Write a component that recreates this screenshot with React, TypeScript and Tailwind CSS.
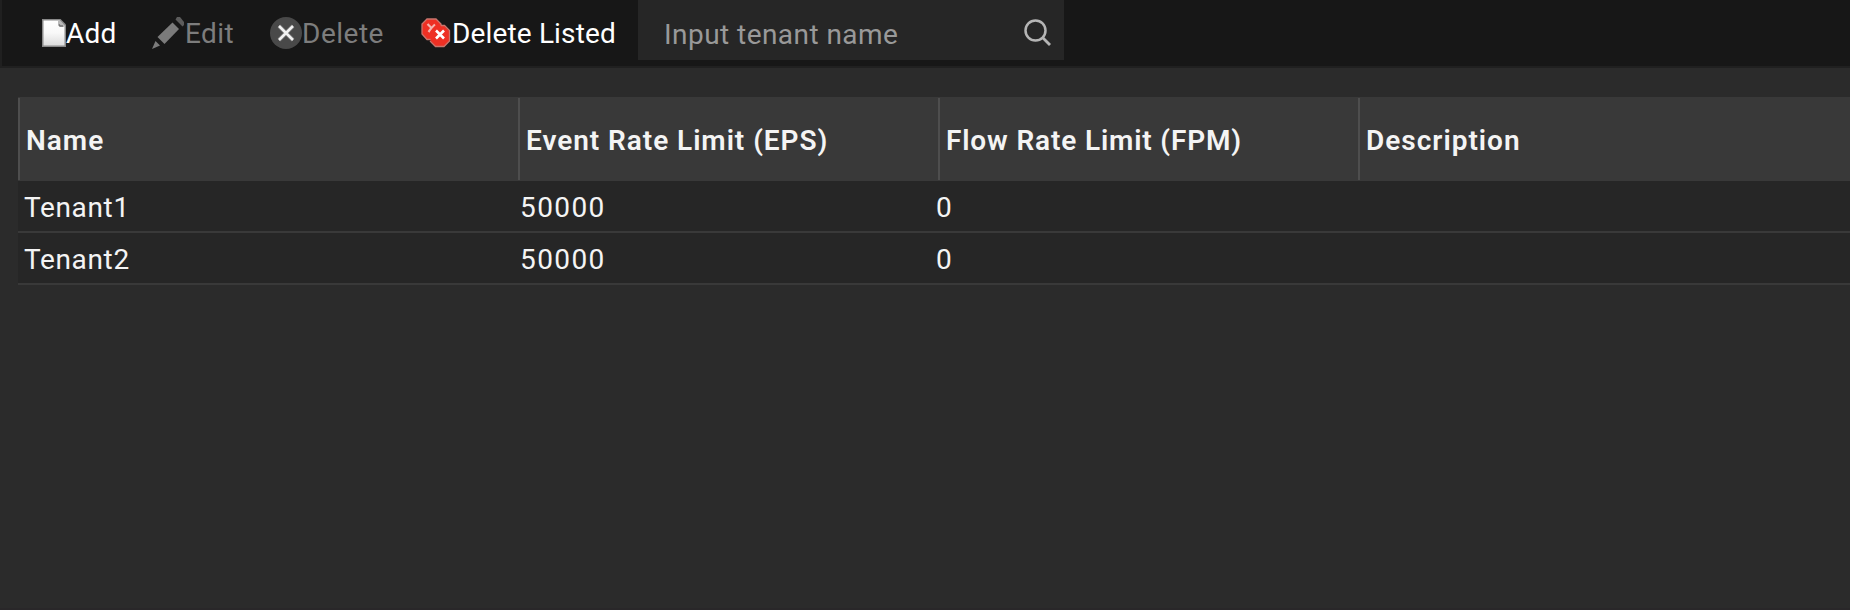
import type { ReactNode } from "react";

const AddIcon = () => (
  <svg width="24" height="28" viewBox="0 0 24 28" fill="none">
    <defs>
      <linearGradient id="page" x1="0" y1="0" x2="0" y2="1">
        <stop offset="0" stopColor="#ffffff" />
        <stop offset="0.5" stopColor="#f8f8f8" />
        <stop offset="1" stopColor="#dcdcdc" />
      </linearGradient>
    </defs>
    <path d="M0 0H18.500L24 5.500V28H0Z" fill="#8a8a8a" />
    <path d="M1.500 1.500H17.500L22.500 7V26.500H1.500Z" fill="url(#page)" />
    <path d="M16 1.500H18.200L22.500 6.500V8H18L16 6Z" fill="#b9b9b9" />
    <path d="M17 5.500L18 7H21" stroke="#747474" strokeWidth="1.500" />
  </svg>
);

const EditIcon = () => (
  <svg width="32" height="32" viewBox="0 0 32 32" fill="#7b7b7b">
    <path d="M25 0H28L32 5V8L30.500 9.500L23.500 2.500Z" fill="#5c5c5c" />
    <path d="M20.500 5.500L27 12L12.500 27L5.500 20Z" />
    <path d="M3.500 24L8 28.500L0 32Z" />
  </svg>
);

const DeleteIcon = () => (
  <svg width="32" height="32" viewBox="0 0 32 32" fill="none">
    <circle cx="16" cy="16" r="16" fill="#494949" />
    <path d="M9 9L23 23M23 9L9 23" stroke="#777777" strokeWidth="4" />
    <path d="M9 9L23 23M23 9L9 23" stroke="#f1f1f1" strokeWidth="2.500" />
  </svg>
);

const DeleteListedIcon = () => (
  <svg width="30" height="30" viewBox="0 0 30 30" fill="none">
    <path d="M6 1H15L20 6V16L14.500 21.500H6L1 16V6Z" fill="#ee3024" stroke="#c9766e" strokeWidth="1.300" />
    <path d="M6.500 6L10.500 10L14 6.500M10.500 10L7.500 14" stroke="#f5b4ae" strokeWidth="2.200" />
    <path d="M14.500 7.500H23L28.500 13V23L23 28.500H14.500L9.500 23V13Z" fill="#ee3024" />
    <path d="M20 7.500H23.500L28.500 12.500V23L23 28.500H14.500L9 23" stroke="#c9766e" strokeWidth="1.300" />
    <path d="M15 12.500L23 20.500M23 12.500L15 20.500" stroke="#ffffff" strokeWidth="2.600" />
  </svg>
);

const SearchIcon = () => (
  <svg width="28" height="28" viewBox="0 0 28 28" fill="none" stroke="#b5b5b5">
    <circle cx="11.500" cy="11.500" r="10" strokeWidth="2.500" />
    <path d="M18.800 18.800L26 26" strokeWidth="2.800" />
  </svg>
);

function Tool({ className, icon, disabled, children }: { className: string; icon: ReactNode; disabled?: boolean; children: ReactNode }) {
  return (
    <button disabled={disabled} className={`flex shrink-0 items-center whitespace-nowrap text-left ${disabled ? "text-[#7d7d7d]" : "text-white"} ${className}`}>
      {icon}
      <span className="pt-0.5">{children}</span>
    </button>
  );
}

const columns = [
  { label: "Name", className: "w-[500px] tracking-[1px]" },
  { label: "Event Rate Limit (EPS)", className: "w-[420px] tracking-[0.95px]" },
  { label: "Flow Rate Limit (FPM)", className: "w-[420px] tracking-[0.85px]" },
  { label: "Description", className: "flex-1 tracking-[1px]" },
];

const tenants = [
  { name: "Tenant1", eps: "50000", fpm: "0" },
  { name: "Tenant2", eps: "50000", fpm: "0" },
];

export default function App() {
  return (
    <div className="flex h-[610px] w-full flex-col overflow-hidden border-b-2 border-[#292729] bg-[#2b2b2b] font-[Roboto,sans-serif] text-[28px] leading-8 text-[#f4f4f4]">
      <header className="flex h-[68px] shrink-0 items-start border-b-2 border-l-2 border-[#202020] bg-[#171717]">
        <div className="flex h-[65px] w-[636px] shrink-0 items-center pl-10">
          <Tool className="w-[110px] tracking-[0.2px]" icon={<AddIcon />}>Add</Tool>
          <Tool className="w-[118px] gap-px tracking-[0.4px]" icon={<EditIcon />} disabled>Edit</Tool>
          <Tool className="w-[151px] tracking-[0.5px]" icon={<DeleteIcon />} disabled>Delete</Tool>
          <Tool className="w-[200px] gap-px tracking-[0.15px]" icon={<DeleteListedIcon />}>Delete Listed</Tool>
        </div>
        <label className="flex h-[60px] w-[426px] shrink-0 items-center bg-[#262626] pl-[26px] pr-3 pt-[5px]">
          <input
            className="min-w-0 flex-1 bg-transparent pt-1 tracking-[0.45px] outline-none placeholder:text-[#999999]"
            placeholder="Input tenant name"
          />
          <SearchIcon />
        </label>
      </header>
      <main className="pl-[18px] pt-[29px]">
        <div className="flex h-[84px] bg-[#393939] font-semibold">
          {columns.map((c) => (
            <div key={c.label} className="contents">
              <div className="my-px w-0.5 shrink-0 bg-[#4e4e4e]" />
              <div className={`-ml-0.5 flex shrink-0 items-center pl-2 pt-[3px] ${c.className}`}>{c.label}</div>
            </div>
          ))}
        </div>
        {tenants.map((t) => (
          <div key={t.name} className="flex h-[52px] items-center border-b-2 border-[#393939] bg-[#262626] pt-[3px]">
            <div className="w-[496px] shrink-0 pl-1.5 tracking-[0.65px]">{t.name}</div>
            <div className="w-[416px] shrink-0 pl-1.5 tracking-[1.4px]">{t.eps}</div>
            <div className="pl-1.5">{t.fpm}</div>
          </div>
        ))}
      </main>
    </div>
  );
}
